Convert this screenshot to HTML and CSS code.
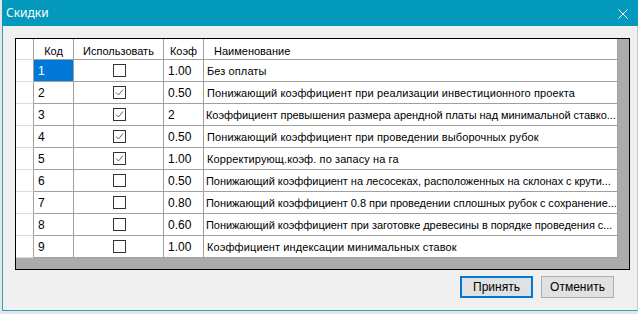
FILE: index.html
```html
<!DOCTYPE html>
<html>
<head>
    <meta charset="utf-8">
    <link rel="stylesheet" href="styles.css">
</head>
<body>
    <div class="desk">
        <div class="dialog">
            <div class="titlebar">
                <span class="title">Скидки</span>
                <svg class="close" width="10" height="10" viewBox="0 0 10 10">
                    <path d="M0.5 0.5 L9.5 9.5 M9.5 0.5 L0.5 9.5" stroke="#fff" stroke-width="1" fill="none"/>
                </svg>
            </div>
            <div class="client">
                <div class="grid">
                    <div class="table">
                        <!-- шапка -->
                        <div class="cell rh"></div>
                        <div class="cell head center">Код</div>
                        <div class="cell head center">Использовать</div>
                        <div class="cell head center">Коэф</div>
                        <div class="cell head name-head">Наименование</div>

                        <div class="cell rh"></div>
                        <div class="cell num selected">1</div>
                        <div class="cell center"><span class="chk"></span></div>
                        <div class="cell num">1.00</div>
                        <div class="cell name">Без оплаты</div>

                        <div class="cell rh"></div>
                        <div class="cell num">2</div>
                        <div class="cell center"><span class="chk on"></span></div>
                        <div class="cell num">0.50</div>
                        <div class="cell name">Понижающий коэффициент при реализации инвестиционного проекта</div>

                        <div class="cell rh"></div>
                        <div class="cell num">3</div>
                        <div class="cell center"><span class="chk on"></span></div>
                        <div class="cell num">2</div>
                        <div class="cell name cut">Коэффициент превышения размера арендной платы над минимальной ставко...</div>

                        <div class="cell rh"></div>
                        <div class="cell num">4</div>
                        <div class="cell center"><span class="chk on"></span></div>
                        <div class="cell num">0.50</div>
                        <div class="cell name">Понижающий коэффициент при проведении выборочных рубок</div>

                        <div class="cell rh"></div>
                        <div class="cell num">5</div>
                        <div class="cell center"><span class="chk on"></span></div>
                        <div class="cell num">1.00</div>
                        <div class="cell name">Корректирующ.коэф. по запасу на га</div>

                        <div class="cell rh"></div>
                        <div class="cell num">6</div>
                        <div class="cell center"><span class="chk"></span></div>
                        <div class="cell num">0.50</div>
                        <div class="cell name cut">Понижающий коэффициент на лесосеках, расположенных на склонах с крути...</div>

                        <div class="cell rh"></div>
                        <div class="cell num">7</div>
                        <div class="cell center"><span class="chk"></span></div>
                        <div class="cell num">0.80</div>
                        <div class="cell name cut">Понижающий коэффициент 0.8 при проведении сплошных рубок с сохранение...</div>

                        <div class="cell rh"></div>
                        <div class="cell num">8</div>
                        <div class="cell center"><span class="chk"></span></div>
                        <div class="cell num">0.60</div>
                        <div class="cell name cut">Понижающий коэффициент при заготовке древесины в порядке проведения с...</div>

                        <div class="cell rh"></div>
                        <div class="cell num">9</div>
                        <div class="cell center"><span class="chk"></span></div>
                        <div class="cell num">1.00</div>
                        <div class="cell name">Коэффициент индексации минимальных ставок</div>
                    </div>
                </div>

                <div class="buttons">
                    <button class="btn btn-default">Принять</button>
                    <button class="btn">Отменить</button>
                </div>
            </div>
        </div>
    </div>
</body>
</html>
```

FILE: styles.css
```css
html,
body {
    margin: 0;
    padding: 0;
}

body {
    width: 638px;
    height: 314px;
    overflow: hidden;
    background-color: #e6e6e6;
    font-family: "Liberation Sans", Arial, sans-serif;
}

.desk {
    padding-left: 2px;
}

.dialog {
    width: 636px;
    height: 311px;
    box-sizing: border-box;
    border-left: 1px solid #2ba4c3;
    border-right: 1px solid #b9cfd5;
    border-bottom: 1px solid #2ba4c3;
    background-color: #f0f0f0;
    display: flex;
    flex-direction: column;
}

.titlebar {
    height: 26px;
    background-color: #0399bc;
    display: flex;
    align-items: center;
    justify-content: space-between;
    margin-left: -1px;
    margin-right: -1px;
}

.title {
    color: #fff;
    font-family: "Noto Sans", sans-serif;
    font-size: 12px;
    padding-left: 4px;
    padding-bottom: 1px;
}

.close {
    margin-right: 10px;
    margin-top: 2px;
}

.client {
    flex: 1;
    padding: 12px 0 0 12px;
}

.grid {
    width: 615px;
    height: 232px;
    box-sizing: border-box;
    border: 1px solid #000;
    background-color: #ababab;
}

.table {
    display: grid;
    grid-template-columns: 18px 40px 90px 40px 414px;
    grid-template-rows: 21px repeat(9, 22px);
    width: 602px;
    background-color: #fff;
}

.cell {
    box-sizing: border-box;
    border-right: 1px solid #a0a0a0;
    border-bottom: 1px solid #a0a0a0;
    display: flex;
    align-items: center;
    white-space: nowrap;
    overflow: hidden;
    font-size: 11px;
    color: #000;
}

.rh {
    border-bottom-color: #dcdcdc;
}

.head {
    padding-top: 3px;
}

.center {
    justify-content: center;
}

.name-head {
    padding-left: 10px;
}

.num {
    font-size: 12px;
    padding-left: 4px;
    padding-top: 1px;
}

.name {
    padding-left: 3px;
    padding-top: 1px;
    letter-spacing: 0.1px;
}

/* обрезанные строки */
.name.cut {
    padding-left: 2px;
    letter-spacing: -0.05px;
}

.selected {
    background-color: #0078d7;
    color: #fff;
}

.chk {
    display: block;
    width: 13px;
    height: 13px;
    box-sizing: border-box;
    border: 1px solid #333;
    background-color: #fff;
    margin-left: 1px;
}

.chk.on {
    background: #fff url("data:image/svg+xml;utf8,<svg xmlns='http://www.w3.org/2000/svg' width='11' height='11' viewBox='0 0 11 11'><path d='M2 5.5 L4.5 8 L9 2.5' fill='none' stroke='%23606060' stroke-width='1'/></svg>") no-repeat center;
}

.buttons {
    display: flex;
    justify-content: flex-end;
    gap: 8px;
    padding-right: 23px;
    margin-top: 6px;
}

.btn {
    width: 73px;
    height: 22px;
    box-sizing: border-box;
    background-color: #e1e1e1;
    border: 1px solid #adadad;
    font-family: "Liberation Sans", Arial, sans-serif;
    font-size: 12px;
    color: #000;
    padding: 0;
}

.btn-default {
    border: 2px solid #0078d7;
}
```
